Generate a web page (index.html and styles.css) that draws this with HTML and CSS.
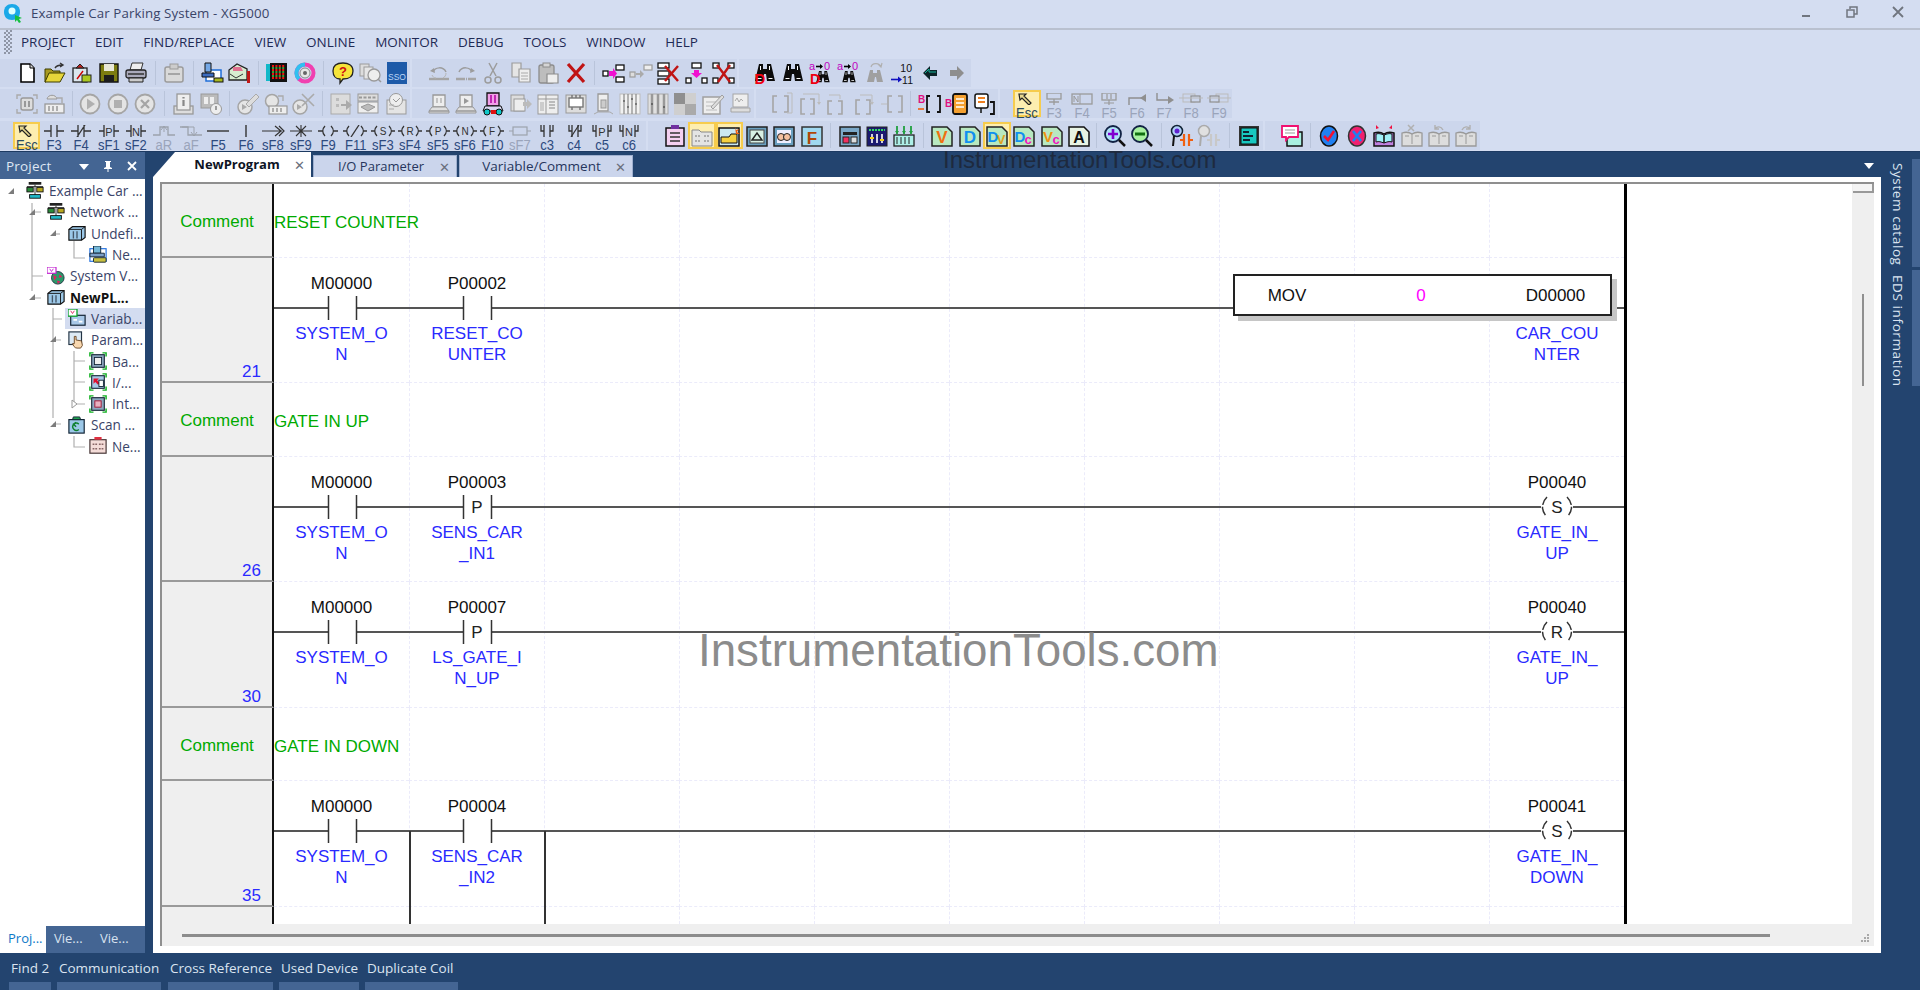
FILE: index.html
```html
<!DOCTYPE html>
<html lang="en">
<head>
<meta charset="utf-8">
<title>Example Car Parking System - XG5000</title>
<link rel="stylesheet" href="styles.css">
</head>
<body>
<svg class="defs" aria-hidden="true">
<!-- toolbar row 1 -->
<symbol id="new" viewBox="0 0 24 24"><path d="M6 3h9l4 4v14H6z" fill="#fff" stroke="#000" stroke-width="1.6"/><path d="M15 3v4h4" fill="#ddd" stroke="#000"/></symbol>
<symbol id="open" viewBox="0 0 24 24"><path d="M3 8h6l2 2h7v3H8l-4 8H3z" fill="#a89a20" stroke="#3c3c00"/><path d="M7 12h16l-5 9H3z" fill="#e6d63a" stroke="#3c3c00"/><path d="M13 7c2-3 4-3 7-3M18 2l3 2-3 2" fill="none" stroke="#333" stroke-width="1.4"/></symbol>
<symbol id="openp" viewBox="0 0 24 24"><rect x="4" y="7" width="14" height="14" fill="#dbe6ee" stroke="#222" stroke-width="1.3"/><path d="M7 7l4-4 4 4z" fill="#b22" stroke="#222"/><path d="M8 18l6-8" stroke="#c00" stroke-width="1.4"/><rect x="13" y="14" width="9" height="7" fill="#aac820" stroke="#222"/></symbol>
<symbol id="save" viewBox="0 0 24 24"><path d="M3 3h18v18H3z" fill="#7c7c10" stroke="#111" stroke-width="1.4"/><rect x="7" y="3" width="10" height="7" fill="#e8e8d8"/><rect x="7" y="14" width="10" height="7" fill="#1c1c1c"/></symbol>
<symbol id="print" viewBox="0 0 24 24"><path d="M8 2h11l-2 7H6z" fill="#eee" stroke="#333"/><rect x="2" y="9" width="20" height="8" rx="2" fill="#aab" stroke="#222" stroke-width="1.3"/><path d="M4 13h16" stroke="#333" stroke-width="1.5"/><path d="M5 17h14v4H5z" fill="#ccc" stroke="#222"/></symbol>
<symbol id="clip" viewBox="0 0 24 24"><rect x="3" y="6" width="18" height="15" rx="2" fill="#d9d9d9" stroke="#9b9b9b" stroke-width="1.5"/><rect x="8" y="3" width="8" height="5" fill="#ccc" stroke="#9b9b9b"/><path d="M6 13h12" stroke="#a5a5a5" stroke-width="2"/></symbol>
<symbol id="pcnet" viewBox="0 0 24 24"><rect x="6" y="9" width="15" height="11" fill="#fff" stroke="#1e6ed8" stroke-width="1.5"/><path d="M5 2h6v9H5z" fill="#74a8e6" stroke="#111"/><path d="M2 12h12v4H2z" fill="#3c6cc0" stroke="#111"/><rect x="14" y="17" width="9" height="4" fill="#a8b820" stroke="#111"/></symbol>
<symbol id="mail" viewBox="0 0 24 24"><path d="M2 9l8-6 10 5v11H2z" fill="#d8eccf" stroke="#222" stroke-width="1.3"/><path d="M6 6h8l2 4H6z" fill="#e07090"/><path d="M3 13l6 4 7-4" fill="none" stroke="#333"/><rect x="20" y="10" width="3" height="12" fill="#c01818"/></symbol>
<symbol id="grid" viewBox="0 0 24 24"><rect x="1" y="3" width="4" height="17" fill="#12b8c8"/><rect x="5" y="2" width="17" height="19" fill="#111"/><path d="M7 5h13M7 9h13M7 13h13M7 17h13" stroke="#f01010" stroke-width="2" stroke-dasharray="2 1.4"/><path d="M7 7h13M7 11h13M7 15h13" stroke="#40d040" stroke-width="1.4" stroke-dasharray="2 1.4"/></symbol>
<symbol id="ring" viewBox="0 0 24 24"><circle cx="12" cy="12" r="8.5" fill="none" stroke="#f040b0" stroke-width="4"/><path d="M12 3.5A8.5 8.5 0 0 0 6 18" fill="none" stroke="#30c0f0" stroke-width="4"/><circle cx="12" cy="12" r="5" fill="#e6e6e6" stroke="#888"/><circle cx="12" cy="12" r="2" fill="#666"/></symbol>
<symbol id="help" viewBox="0 0 24 24"><path d="M2 10c0-6 5-8 10-8s10 2 10 8-5 8-10 8l-3 4v-4c-4 0-7-3-7-8z" fill="#f6e43a" stroke="#222" stroke-width="1.3"/></symbol>
<symbol id="faces" viewBox="0 0 24 24"><rect x="2" y="3" width="9" height="12" fill="#ddd" stroke="#9c9c9c"/><rect x="6" y="6" width="9" height="12" fill="#e6e6e6" stroke="#9c9c9c"/><circle cx="16" cy="14" r="6" fill="#eee" stroke="#999" stroke-width="1.3"/><path d="M20 18l3 3" stroke="#999" stroke-width="1.5"/></symbol>
<symbol id="sso" viewBox="0 0 24 24"><rect x="2" y="1" width="20" height="22" fill="#1d5aa8"/></symbol>
<symbol id="undo" viewBox="0 0 24 24"><path d="M6 11c2-5 10-6 13 0" fill="none" stroke="#9c9c9c" stroke-width="1.5"/><path d="M3 10l4-3 1 5z" fill="#9c9c9c"/><path d="M2 18h20" stroke="#a5a5a5" stroke-width="2.4"/><path d="M5 14c1 2 2 3 4 3M19 12c0 2-1 4-3 5" fill="none" stroke="#b5b5b5"/></symbol>
<symbol id="redo" viewBox="0 0 24 24"><path d="M18 11c-2-5-10-6-13 0" fill="none" stroke="#9c9c9c" stroke-width="1.5"/><path d="M21 10l-4-3-1 5z" fill="#9c9c9c"/><path d="M2 18h20" stroke="#a5a5a5" stroke-width="2.4" stroke-dasharray="9 1 1 1"/></symbol>
<symbol id="cut" viewBox="0 0 24 24"><path d="M8 2l7 13M16 2L9 15" stroke="#9c9c9c" stroke-width="1.5"/><circle cx="7" cy="19" r="3" fill="none" stroke="#9c9c9c" stroke-width="1.5"/><circle cx="17" cy="19" r="3" fill="none" stroke="#9c9c9c" stroke-width="1.5"/></symbol>
<symbol id="copy" viewBox="0 0 24 24"><path d="M3 2h9v14H3z" fill="#e5e5e5" stroke="#9c9c9c" stroke-width="1.2"/><path d="M10 8h11v13H10z" fill="#eee" stroke="#9c9c9c" stroke-width="1.2"/><path d="M12 12h7M12 15h7M12 18h7" stroke="#aaa"/></symbol>
<symbol id="paste" viewBox="0 0 24 24"><rect x="3" y="4" width="15" height="18" rx="2" fill="#bdbdbd" stroke="#8c8c8c" stroke-width="1.3"/><rect x="7" y="2" width="7" height="4" fill="#d5d5d5" stroke="#8c8c8c"/><path d="M11 13h11v9H11z" fill="#eee" stroke="#8c8c8c" stroke-width="1.2"/></symbol>
<symbol id="redx" viewBox="0 0 24 24"><path d="M4 3l16 18M20 3L4 21" stroke="#c01414" stroke-width="3.2"/></symbol>
<symbol id="tins" viewBox="0 0 24 24"><rect x="1" y="10" width="5" height="5" fill="#fff" stroke="#111" stroke-width="1.3"/><rect x="14" y="4" width="8" height="5" fill="#fff" stroke="#111" stroke-width="1.3"/><rect x="14" y="16" width="8" height="5" fill="#fff" stroke="#111" stroke-width="1.3"/><path d="M7 10h4V7l4 5.500-4 5.500v-3H7z" fill="#f010d0"/></symbol>
<symbol id="tinsg" viewBox="0 0 24 24"><rect x="1" y="11" width="5" height="5" fill="#ddd" stroke="#9c9c9c" stroke-width="1.2"/><rect x="15" y="4" width="8" height="5" fill="#eee" stroke="#9c9c9c" stroke-width="1.2"/><path d="M7 12h4V9l4 4-4 4v-3H7z" fill="#aaa"/></symbol>
<symbol id="tdel" viewBox="0 0 24 24"><rect x="2" y="2" width="11" height="5" fill="#fff" stroke="#111" stroke-width="1.3"/><rect x="2" y="10" width="11" height="5" fill="#fff" stroke="#111" stroke-width="1.3"/><rect x="2" y="18" width="11" height="5" fill="#fff" stroke="#111" stroke-width="1.3"/><path d="M9 5l13 15M22 5L9 20" stroke="#c01414" stroke-width="2.4"/></symbol>
<symbol id="tdn" viewBox="0 0 24 24"><rect x="8" y="2" width="9" height="5" fill="#fff" stroke="#111" stroke-width="1.3"/><rect x="2" y="17" width="5" height="5" fill="#fff" stroke="#111" stroke-width="1.3"/><rect x="18" y="17" width="5" height="5" fill="#fff" stroke="#111" stroke-width="1.3"/><path d="M10 9h5v3h3l-5.500 5L7 12h3z" fill="#f010d0"/></symbol>
<symbol id="txd" viewBox="0 0 24 24"><rect x="2" y="2" width="6" height="5" fill="#fff" stroke="#111" stroke-width="1.3"/><rect x="17" y="2" width="6" height="5" fill="#fff" stroke="#111" stroke-width="1.3"/><rect x="2" y="17" width="5" height="5" fill="#fff" stroke="#111" stroke-width="1.3"/><rect x="18" y="17" width="5" height="5" fill="#fff" stroke="#111" stroke-width="1.3"/><path d="M6 4l13 17M19 4L7 21" stroke="#c01414" stroke-width="2.4"/></symbol>
<symbol id="bin" viewBox="0 0 24 24"><path d="M6 3h4v5h4V3h4l4 17h-8l-1-7h-2l-1 7H2z" fill="#0c0c0c"/><path d="M7 5h1v4H7zM16 5h1v4h-1zM4.500 17h4v1h-4zM15.500 17h4v1h-4z" fill="#fff"/></symbol>
<symbol id="afind" viewBox="0 0 24 24"><path d="M8 5.500h6" stroke="#000" stroke-width="1.6"/><path d="M12 3l3 2.500-3 2.500z"/><svg x="5" y="8" width="16" height="16" viewBox="0 0 24 24"><use href="#bin"/></svg></symbol>
<symbol id="afindd" viewBox="0 0 24 24"><path d="M8 5.500h6" stroke="#000" stroke-width="1.6"/><path d="M12 3l3 2.500-3 2.500z"/><svg x="7" y="8" width="16" height="16" viewBox="0 0 24 24"><use href="#bin"/></svg></symbol>
<symbol id="bing" viewBox="0 0 24 24"><path d="M7 9h3v3h4V9h3l3 12h-6l-1-5h-1l-1 5H4z" fill="#a0a0a0"/><path d="M8 6c1-4 8-5 10 0M15 3l3 3 1-4" fill="none" stroke="#b0b0b0" stroke-width="1.2"/></symbol>
<symbol id="n1011" viewBox="0 0 24 24"><path d="M1 18.500h9" stroke="#1010c0" stroke-width="1.6"/><path d="M8 15.500l4 3-4 3z" fill="#1010c0"/></symbol>
<symbol id="larrow" viewBox="0 0 24 24"><path d="M5 12l7-7v4h7v6h-7v4z" fill="#0c2428"/><path d="M7 12l4-4v3h7" fill="none" stroke="#14b098"/></symbol>
<symbol id="rarrow" viewBox="0 0 24 24"><path d="M19 12l-7-7v4H5v6h7v4z" fill="#8e8e8e"/></symbol>
<!-- toolbar row 2 -->
<symbol id="stopm" viewBox="0 0 24 24"><path d="M2 7V3h4M18 3h4v4M22 17v4h-4M6 21H2v-4" fill="none" stroke="#aaa" stroke-width="1.4"/><rect x="6" y="6" width="12" height="12" rx="2" fill="#ddd" stroke="#999" stroke-width="1.4"/><path d="M10 9v6M14 9v6" stroke="#999" stroke-width="2"/></symbol>
<symbol id="plcup" viewBox="0 0 24 24"><path d="M5 7c1-5 9-5 10 0z" fill="#ddd" stroke="#999"/><path d="M15 6h5v5" fill="none" stroke="#aaa" stroke-width="1.4"/><rect x="3" y="12" width="19" height="9" fill="#eee" stroke="#999" stroke-width="1.3"/><path d="M7 14v5M11 14v5M15 14v5" stroke="#999" stroke-width="1.5"/></symbol>
<symbol id="play" viewBox="0 0 24 24"><circle cx="12" cy="12" r="9.500" fill="#e4e4e4" stroke="#a5a5a5" stroke-width="1.8"/><path d="M9 6.500l8 5.500-8 5.500z" fill="#b0b0b0"/></symbol>
<symbol id="stop" viewBox="0 0 24 24"><circle cx="12" cy="12" r="9.500" fill="#e4e4e4" stroke="#a5a5a5" stroke-width="1.8"/><rect x="8" y="8" width="8" height="8" fill="#b0b0b0"/></symbol>
<symbol id="cx" viewBox="0 0 24 24"><circle cx="12" cy="12" r="9.500" fill="#e4e4e4" stroke="#a5a5a5" stroke-width="1.8"/><path d="M8 8l8 8M16 8l-8 8" stroke="#a5a5a5" stroke-width="2.2"/></symbol>
<symbol id="info" viewBox="0 0 24 24"><rect x="3" y="14" width="19" height="8" fill="#ddd" stroke="#999" stroke-width="1.3"/><rect x="6" y="2" width="13" height="16" fill="#eee" stroke="#999" stroke-width="1.3"/><path d="M12.500 5v1.500M12.500 8v6" stroke="#888" stroke-width="2.200"/></symbol>
<symbol id="gauge" viewBox="0 0 24 24"><rect x="2" y="2" width="17" height="14" fill="#bbb" stroke="#999"/><rect x="5" y="5" width="4" height="7" fill="#eee"/><rect x="11" y="5" width="4" height="7" fill="#eee"/><circle cx="17" cy="17" r="5.500" fill="#eee" stroke="#999"/><path d="M17 14v4" stroke="#888" stroke-width="1.6"/></symbol>
<symbol id="probe" viewBox="0 0 24 24"><circle cx="9" cy="15" r="7" fill="#e5e5e5" stroke="#a5a5a5" stroke-width="1.5"/><path d="M10 12l10-10 3 3-10 10z" fill="#ddd" stroke="#aaa"/><path d="M6 12l5 3-5 3z" fill="#aaa"/></symbol>
<symbol id="probeb" viewBox="0 0 24 24"><circle cx="8" cy="9" r="6.500" fill="#e5e5e5" stroke="#a5a5a5" stroke-width="1.5"/><path d="M14 4h5v5" fill="none" stroke="#aaa" stroke-width="1.3"/><rect x="5" y="14" width="18" height="8" fill="#eee" stroke="#999" stroke-width="1.2"/><path d="M9 16v4M13 16v4M17 16v4" stroke="#999" stroke-width="1.5"/></symbol>
<symbol id="probex" viewBox="0 0 24 24"><circle cx="9" cy="15" r="7" fill="#e5e5e5" stroke="#a5a5a5" stroke-width="1.5"/><path d="M6 12l5 3-5 3z" fill="#aaa"/><path d="M11 2l12 12M23 2L11 14" stroke="#aaa" stroke-width="1.6"/></symbol>
<symbol id="wsel" viewBox="0 0 24 24"><rect x="2" y="2" width="19" height="20" fill="#dcdcdc" stroke="#aaa"/><path d="M7 6h3v3H7zM7 12h3v3H7z" fill="#bbb"/><path d="M12 12h5V8l6 5-6 5v-4h-5z" fill="#aaa"/></symbol>
<symbol id="wtab" viewBox="0 0 24 24"><rect x="2" y="2" width="20" height="7" fill="#ddd" stroke="#999"/><path d="M3 5.500h18" stroke="#999" stroke-dasharray="3 1.500" stroke-width="2"/><rect x="2" y="10" width="20" height="11" fill="#eee" stroke="#999"/><path d="M5 15l7-3 7 3-7 4z" fill="#bbb" stroke="#999"/></symbol>
<symbol id="wfind" viewBox="0 0 24 24"><rect x="3" y="8" width="19" height="14" fill="#e4e4e4" stroke="#999"/><circle cx="12" cy="8" r="6.500" fill="#eee" stroke="#999"/><path d="M9 7l3 3 4-4" fill="none" stroke="#999"/><path d="M5 13h5M5 17h5" stroke="#aaa"/></symbol>
<symbol id="pc1" viewBox="0 0 24 24"><path d="M6 3h12v12H6z" fill="#eee" stroke="#999" stroke-width="1.3"/><path d="M10 6v5M14 6v5" stroke="#999"/><path d="M2 19h20v2H2zM5 15h14l3 4H2z" fill="#e0e0e0" stroke="#999"/></symbol>
<symbol id="pc2" viewBox="0 0 24 24"><path d="M6 3h12v12H6z" fill="#eee" stroke="#999" stroke-width="1.3"/><path d="M10 6l5 3-5 3z" fill="#999"/><path d="M2 19h20v2H2zM5 15h14l3 4H2z" fill="#e0e0e0" stroke="#999"/></symbol>
<symbol id="pcpink" viewBox="0 0 24 24"><path d="M6 1h12v13H6z" fill="#f2a0e8" stroke="#111" stroke-width="1.3"/><path d="M10 3v8M14 3v8" stroke="#b000a0" stroke-width="1.500"/><path d="M4 14h16l2 5H2z" fill="#d8d8f0" stroke="#111"/><circle cx="6" cy="20" r="3" fill="#10c8c8" stroke="#111"/><circle cx="18" cy="20" r="3" fill="#10c8c8" stroke="#111"/><rect x="10" y="18" width="5" height="4" fill="#e01010"/></symbol>
<symbol id="docs" viewBox="0 0 24 24"><rect x="2" y="3" width="13" height="16" fill="#ddd" stroke="#999"/><rect x="5" y="7" width="11" height="12" fill="#eee" stroke="#999"/><path d="M14 10h4V7l5 5-5 5v-3h-4z" fill="#bbb"/></symbol>
<symbol id="cols" viewBox="0 0 24 24"><rect x="2" y="3" width="20" height="19" fill="#eee" stroke="#999"/><path d="M10 3v19M2 7h20" stroke="#999"/><path d="M13 10h6M13 13h6M13 16h6" stroke="#888"/><rect x="4" y="10" width="4" height="9" fill="#ccc"/></symbol>
<symbol id="chip" viewBox="0 0 24 24"><rect x="2" y="3" width="20" height="18" fill="#ddd" stroke="#999"/><rect x="5" y="6" width="14" height="9" fill="#fff" stroke="#777" stroke-width="1.4"/><path d="M8 6V3M12 6V3M16 6V3M8 18v-3M16 18v-3" stroke="#777" stroke-width="1.5"/></symbol>
<symbol id="unit" viewBox="0 0 24 24"><path d="M7 2h10v17H7z" fill="#eee" stroke="#999" stroke-width="1.3"/><rect x="10" y="8" width="5" height="8" fill="#ccc" stroke="#999"/><path d="M3 22l4-2h12l3 2" fill="none" stroke="#aaa"/></symbol>
<symbol id="rack" viewBox="0 0 24 24"><rect x="2" y="2" width="20" height="20" fill="#f2f2f2" stroke="#bbb"/><path d="M6 2v20M10 2v20M14 2v20M18 2v20" stroke="#888" stroke-width="1.2"/><path d="M5 9h2M9 15h2M13 7h2M17 12h2" stroke="#777" stroke-width="2"/></symbol>
<symbol id="rack2" viewBox="0 0 24 24"><rect x="2" y="2" width="20" height="20" fill="#e0e0e0" stroke="#aaa"/><path d="M6 2v20M12 2v20M18 2v20" stroke="#999" stroke-width="2.500"/><path d="M5 12h2M17 15h2" stroke="#666" stroke-width="2"/></symbol>
<symbol id="checker" viewBox="0 0 24 24"><rect x="1" y="1" width="22" height="22" fill="#cfcfcf"/><rect x="1" y="1" width="11" height="11" fill="#8f8f8f"/><rect x="12" y="12" width="11" height="11" fill="#aaa"/></symbol>
<symbol id="note" viewBox="0 0 24 24"><rect x="2" y="5" width="17" height="17" fill="#eee" stroke="#a0a0a0" stroke-width="1.5"/><path d="M5 10h11M5 14h8M5 18h11" stroke="#bbb"/><path d="M10 15L21 3l2 2-11 12z" fill="#ddd" stroke="#a0a0a0"/></symbol>
<symbol id="pcw" viewBox="0 0 24 24"><rect x="5" y="2" width="15" height="13" fill="#eee" stroke="#a5a5a5"/><path d="M7 9l2-3 2 4 2-3 2 2" fill="none" stroke="#aaa"/><path d="M3 16h19v4H3z" fill="#ddd" stroke="#a5a5a5"/></symbol>
<symbol id="bk1" viewBox="0 0 24 24"><path d="M7 4H3v16h4M14 4h4v16h-4" fill="none" stroke="#a5a5a5" stroke-width="1.600"/><path d="M17 1h5v20h-5" fill="none" stroke="#bcbcbc"/></symbol>
<symbol id="bk2" viewBox="0 0 24 24"><path d="M7 7H3v15h4M12 7h4v15h-4" fill="none" stroke="#a5a5a5" stroke-width="1.600"/><path d="M5 2h16v10" fill="none" stroke="#bcbcbc"/><path d="M19 10l2 3 2-3z" fill="#bcbcbc"/></symbol>
<symbol id="bk3" viewBox="0 0 24 24"><path d="M7 9H3v13h4M13 9h4v13h-4" fill="none" stroke="#a5a5a5" stroke-width="1.600"/><path d="M4 3h11v4" fill="none" stroke="#bcbcbc"/></symbol>
<symbol id="bk4" viewBox="0 0 24 24"><path d="M7 8H3v14h4M13 8h4v14h-4" fill="none" stroke="#a5a5a5" stroke-width="1.600"/><path d="M7 3h12v9" fill="none" stroke="#bcbcbc"/><path d="M17 10l2 3 2-3z" fill="#bcbcbc"/></symbol>
<symbol id="bk5" viewBox="0 0 24 24"><path d="M12 4H8v16h4M18 4h4v16h-4" fill="none" stroke="#a5a5a5" stroke-width="1.600"/><path d="M1 12h6" stroke="#bcbcbc"/></symbol>
<symbol id="bb1" viewBox="0 0 24 24"><path d="M0 17h6" stroke="#f06010" stroke-width="1.600"/><path d="M12 4H9v16h3M19 4h3v16h-3" fill="none" stroke="#111" stroke-width="1.800"/></symbol>
<symbol id="bb2" viewBox="0 0 24 24"><rect x="8" y="2" width="14" height="20" rx="2" fill="#f4a030" stroke="#111" stroke-width="1.800"/><path d="M11 7h8M11 11h8M11 15h8" stroke="#fff" stroke-width="1.600"/></symbol>
<symbol id="bb3" viewBox="0 0 24 24"><rect x="2" y="2" width="13" height="14" rx="2" fill="#fff" stroke="#111" stroke-width="1.500"/><path d="M5 6h7M5 10h7" stroke="#f08020" stroke-width="2"/><path d="M8 16v5" stroke="#111" stroke-width="1.500"/><path d="M17 10h4v12h-4" fill="none" stroke="#111" stroke-width="1.800"/></symbol>
<symbol id="esc" viewBox="0 0 24 12"><path d="M4 1h7L9 3l7 7-2 2-7-7-2 2z" fill="#e8d890" stroke="#222" stroke-width="1.200"/></symbol>
<symbol id="g3" viewBox="0 0 24 12"><rect x="5" y="0" width="14" height="6" fill="none" stroke="#9a9a9a" stroke-width="1.300"/><path d="M12 6v6M7 9h10" stroke="#9a9a9a" stroke-width="1.300"/></symbol>
<symbol id="g4" viewBox="0 0 24 12"><rect x="2" y="1" width="20" height="10" fill="none" stroke="#9a9a9a" stroke-width="1.300"/><path d="M10 1v10M4 9V3l4 6V3" fill="none" stroke="#9a9a9a"/></symbol>
<symbol id="g5" viewBox="0 0 24 12"><rect x="5" y="0" width="14" height="7" fill="none" stroke="#9a9a9a" stroke-width="1.300"/><path d="M10 1v5M14 1v5M12 7v5M7 10h10" stroke="#9a9a9a" stroke-width="1.200"/></symbol>
<symbol id="g6" viewBox="0 0 24 12"><path d="M4 12V5h13" fill="none" stroke="#8f8f8f" stroke-width="1.400"/><path d="M21 1v8l-6-4z" fill="#8f8f8f"/></symbol>
<symbol id="g7" viewBox="0 0 24 12"><path d="M5 0v7h13" fill="none" stroke="#8f8f8f" stroke-width="1.400"/><path d="M16 3v8l6-4z" fill="#8f8f8f"/></symbol>
<symbol id="g8" viewBox="0 0 24 12"><rect x="4" y="1" width="12" height="8" fill="none" stroke="#bbb"/><rect x="12" y="3" width="9" height="6" fill="#ccd6ec" stroke="#8f8f8f" stroke-width="1.200"/><path d="M0 5h24" stroke="#bbb"/></symbol>
<symbol id="g9" viewBox="0 0 24 12"><rect x="9" y="1" width="12" height="8" fill="none" stroke="#bbb"/><rect x="3" y="3" width="9" height="6" fill="#ccd6ec" stroke="#8f8f8f" stroke-width="1.200"/><path d="M0 5h24" stroke="#bbb"/></symbol>
<!-- function keys -->
<symbol id="kno" viewBox="0 0 24 12"><path d="M2 6h7M9 0v12M15 0v12M15 6h7" fill="none" stroke="#333" stroke-width="1.300"/></symbol>
<symbol id="knc" viewBox="0 0 24 12"><path d="M2 6h7M9 0v12M15 0v12M15 6h7M8 12l8-12" fill="none" stroke="#333" stroke-width="1.300"/></symbol>
<symbol id="kw" viewBox="0 0 24 12"><path d="M2 6h5M7 0v12M17 0v12M17 6h5" fill="none" stroke="#333" stroke-width="1.300"/></symbol>
<symbol id="rise" viewBox="0 0 24 12"><path d="M1 10h7V2h8v8h7" fill="none" stroke="#9ca2ac" stroke-width="1.300"/><path d="M12 7V2M9 5l3-4 3 4" fill="none" stroke="#9ca2ac"/></symbol>
<symbol id="fall" viewBox="0 0 24 12"><path d="M1 2h8v8h14" fill="none" stroke="#9ca2ac" stroke-width="1.300"/><path d="M3 2h12v7" fill="none" stroke="#9ca2ac"/><path d="M12 7l3 4 3-4" fill="none" stroke="#9ca2ac"/></symbol>
<symbol id="hl" viewBox="0 0 24 12"><path d="M1 6h22" stroke="#333" stroke-width="1.400"/></symbol>
<symbol id="vl" viewBox="0 0 24 12"><path d="M12 0v12" stroke="#333" stroke-width="1.400"/></symbol>
<symbol id="ar" viewBox="0 0 24 12"><path d="M1 6h20M14 1l6 5-6 5M18 1l5 5-5 5" fill="none" stroke="#333" stroke-width="1.200"/></symbol>
<symbol id="star" viewBox="0 0 24 12"><path d="M1 6h22M12 0v12M7 1l10 10M17 1L7 11" fill="none" stroke="#333" stroke-width="1.100"/></symbol>
<symbol id="cb" viewBox="0 0 24 12"><path d="M2 6h5M22 6h-5M9 1C6 4 6 8 9 11M15 1c3 3 3 7 0 10" fill="none" stroke="#333" stroke-width="1.300"/></symbol>
<symbol id="cbn" viewBox="0 0 24 12"><path d="M0 6h4M24 6h-4M6 1C3 4 3 8 6 11M18 1c3 3 3 7 0 10" fill="none" stroke="#333" stroke-width="1.300"/></symbol>
<symbol id="cbs" viewBox="0 0 24 12"><use href="#cbn"/><path d="M8 12l8-12" stroke="#333" stroke-width="1.300"/></symbol>
<symbol id="fb" viewBox="0 0 24 12"><path d="M1 6h4M19 6h4" stroke="#9ca2ac" stroke-width="1.200"/><rect x="5" y="2" width="14" height="8" fill="none" stroke="#9ca2ac" stroke-width="1.200"/></symbol>
<symbol id="c3" viewBox="0 0 24 12"><path d="M6 0v6h3M9 0v12M15 0v12M18 0v6h-3" fill="none" stroke="#333" stroke-width="1.300"/></symbol>
<symbol id="c4" viewBox="0 0 24 12"><use href="#c3"/><path d="M8 12l8-12" stroke="#333" stroke-width="1.200"/></symbol>
<symbol id="cw" viewBox="0 0 24 12"><path d="M3 0v6h3M6 0v12M18 0v12M21 0v6h-3" fill="none" stroke="#333" stroke-width="1.300"/></symbol>
<!-- row 3 group 2 -->
<symbol id="clip3" viewBox="0 0 24 24"><rect x="3" y="4" width="18" height="18" fill="#f4d0f0" stroke="#111" stroke-width="1.500"/><rect x="8" y="1" width="8" height="4" fill="#7030a0"/><path d="M7 9h10M7 13h10M7 17h10" stroke="#333" stroke-width="1.500"/></symbol>
<symbol id="foldh" viewBox="0 0 24 24"><path d="M2 6h7l2 2h11v14H2z" fill="#e4e4e4" stroke="#888"/><path d="M5 12h5M14 12h5M5 17h5M14 17h5" stroke="#999" stroke-width="1.500" stroke-dasharray="2 1"/></symbol>
<symbol id="foldo" viewBox="0 0 24 24"><rect x="2" y="4" width="20" height="18" fill="#cbe8f0" stroke="#111" stroke-width="1.500"/><path d="M4 13h8l2-3h6v9H4z" fill="#f4d040" stroke="#111"/><path d="M18 3l1 3 3-1-2 3 3 2-4 0z" fill="#f06010"/></symbol>
<symbol id="scr1" viewBox="0 0 24 24"><rect x="2" y="3" width="20" height="19" fill="#6aa0c0" stroke="#222" stroke-width="1.500"/><rect x="5" y="6" width="14" height="13" fill="#d8f0e4" stroke="#444"/><path d="M7 16l5-7 5 7z" fill="none" stroke="#222" stroke-width="1.400"/></symbol>
<symbol id="scr2" viewBox="0 0 24 24"><rect x="2" y="3" width="20" height="19" fill="#6aa0c0" stroke="#222" stroke-width="1.500"/><rect x="5" y="6" width="14" height="13" fill="#eef"/><circle cx="9" cy="13" r="3.500" fill="#f4c0a0" stroke="#222"/><circle cx="15" cy="13" r="3.500" fill="#f4c0a0" stroke="#222"/></symbol>
<symbol id="scrf" viewBox="0 0 24 24"><rect x="2" y="3" width="20" height="19" fill="#a0d8f0" stroke="#333" stroke-width="1.500"/></symbol>
<symbol id="tool1" viewBox="0 0 24 24"><rect x="2" y="3" width="20" height="19" fill="#7aa8c8" stroke="#222" stroke-width="1.500"/><path d="M5 8h14v3H5z" fill="#222"/><rect x="5" y="13" width="6" height="6" fill="#f03060" stroke="#222"/><rect x="13" y="13" width="6" height="6" fill="#ddd" stroke="#222"/></symbol>
<symbol id="tool2" viewBox="0 0 24 24"><rect x="2" y="3" width="20" height="19" fill="#1a1a70" stroke="#222"/><path d="M4 6h16" stroke="#30e060" stroke-width="2" stroke-dasharray="2 1"/><path d="M7 10v9M12 10v9M17 10v9" stroke="#fff" stroke-width="1.600"/><path d="M5 14h4M15 16h4" stroke="#f0d020" stroke-width="2"/></symbol>
<symbol id="tool3" viewBox="0 0 24 24"><rect x="2" y="11" width="20" height="11" fill="#aef0e8" stroke="#222" stroke-width="1.300"/><path d="M5 13v7M9 13v7M13 13v7M17 13v7" stroke="#222"/><path d="M5 2v8M12 2v8M19 2v8" stroke="#20a040" stroke-width="1.800"/><path d="M3 7l2 3 2-3M10 7l2 3 2-3M17 7l2 3 2-3" fill="#20a040"/></symbol>
<symbol id="doc" viewBox="0 0 24 24"><path d="M2 3h15l5 5v14H2z" fill="#b8e8c0" stroke="#222" stroke-width="1.500"/></symbol>
<symbol id="doca" viewBox="0 0 24 24"><path d="M2 3h15l5 5v14H2z" fill="#e8f4e4" stroke="#111" stroke-width="1.500"/></symbol>
<symbol id="zin" viewBox="0 0 24 24"><circle cx="10" cy="10" r="8" fill="#b0e0f8" stroke="#124" stroke-width="1.800"/><path d="M16 16l6 6" stroke="#111" stroke-width="2.500"/><path d="M10 5v10M5 10h10" stroke="#8000d0" stroke-width="2.600"/></symbol>
<symbol id="zout" viewBox="0 0 24 24"><circle cx="10" cy="10" r="8" fill="#a8f0a0" stroke="#124" stroke-width="1.800"/><path d="M16 16l6 6" stroke="#111" stroke-width="2.500"/><path d="M5 10h10" stroke="#107010" stroke-width="3"/></symbol>
<symbol id="zpin" viewBox="0 0 24 24"><circle cx="7" cy="7" r="5.500" fill="#b0d0f8" stroke="#123" stroke-width="1.500"/><circle cx="7" cy="7" r="2.500" fill="#6020d0"/><path d="M4 12l-1 10" stroke="#111" stroke-width="2"/><path d="M10 16h3M20 16h3M14 10v12M19 10v12" stroke="#f06010" stroke-width="2.200"/></symbol>
<symbol id="zping" viewBox="0 0 24 24"><circle cx="7" cy="7" r="5.500" fill="#e0e0e0" stroke="#aaa" stroke-width="1.500"/><path d="M4 12l-1 10" stroke="#aaa" stroke-width="2"/><path d="M10 16h3M20 16h3M14 10v12M19 10v12" stroke="#c8c8c8" stroke-width="2.200"/></symbol>
<symbol id="term" viewBox="0 0 24 24"><rect x="2" y="2" width="20" height="20" fill="#333" /><rect x="4" y="4" width="16" height="16" fill="#18c8c0" stroke="#111"/><path d="M6 8h6M6 12h10M6 16h7" stroke="#123" stroke-width="1.800"/></symbol>
<symbol id="cmt" viewBox="0 0 24 24"><rect x="7" y="8" width="15" height="14" fill="#a8f0e0" stroke="#111" stroke-width="1.500"/><path d="M2 2h16v11H9l-3 3v-3H2z" fill="#fff" stroke="#f01070" stroke-width="1.800"/><path d="M5 6h10M5 9h10" stroke="#999"/></symbol>
<symbol id="chk" viewBox="0 0 24 24"><ellipse cx="12" cy="12" rx="8.500" ry="10" fill="#2080f0" stroke="#111" stroke-width="1.500"/><path d="M7 12l4 4 6-9" fill="none" stroke="#f01030" stroke-width="2.600"/></symbol>
<symbol id="unchk" viewBox="0 0 24 24"><ellipse cx="12" cy="12" rx="8.500" ry="10" fill="#f02070" stroke="#333" stroke-width="1.500"/><path d="M8 7l8 10M16 7L8 17" stroke="#2080f0" stroke-width="2.600"/></symbol>
<symbol id="bm" viewBox="0 0 24 24"><path d="M2 9c3-1 7-1 10 1 3-2 7-2 10-1v13H2z" fill="#c080e0" stroke="#111" stroke-width="1.500"/><path d="M4 10c3-1 5 0 8 1v8c-3-1-5-2-8-1zM20 10c-3-1-5 0-8 1v8c3-1 5-2 8-1z" fill="#a0f0f8" stroke="#111"/><path d="M4 1l3 3-3 1zM20 1l-3 3 3 1z" fill="#f01040"/></symbol>
<symbol id="bmx" viewBox="0 0 24 24"><path d="M2 9c3-1 7-1 10 1 3-2 7-2 10-1v13H2z" fill="#ddd" stroke="#999" stroke-width="1.300"/><path d="M12 10v10M5 12h4M15 12h4" stroke="#999"/><path d="M8 1l6 6M14 1L8 7" stroke="#b0b0b0" stroke-width="1.500"/></symbol>
<symbol id="bml" viewBox="0 0 24 24"><path d="M2 9c3-1 7-1 10 1 3-2 7-2 10-1v13H2z" fill="#ddd" stroke="#999" stroke-width="1.300"/><path d="M12 10v10M5 12h4M15 12h4" stroke="#999"/><path d="M16 6c-2-4-6-4-8-1M8 1v4h4" fill="none" stroke="#b0b0b0" stroke-width="1.400"/></symbol>
<symbol id="bmr" viewBox="0 0 24 24"><path d="M2 9c3-1 7-1 10 1 3-2 7-2 10-1v13H2z" fill="#ddd" stroke="#999" stroke-width="1.300"/><path d="M12 10v10M5 12h4M15 12h4" stroke="#999"/><path d="M8 6c2-4 6-4 8-1M16 1v4h-4" fill="none" stroke="#b0b0b0" stroke-width="1.400"/></symbol>
<!-- tree icons -->
<symbol id="tnet" viewBox="0 0 20 20"><rect x="3" y="0" width="14" height="3" fill="#222"/><path d="M10 3v14" stroke="#222"/><rect x="1" y="6" width="7" height="5" fill="#2a8a3a" stroke="#111"/><rect x="12" y="6" width="7" height="5" fill="#b8a820" stroke="#111"/><path d="M1 5h18" stroke="#333"/><rect x="4" y="14" width="12" height="4" fill="#22b8c8" stroke="#111"/></symbol>
<symbol id="tplc" viewBox="0 0 20 20"><path d="M1 6l4-3h14v12l-4 3H1z" fill="#9cc8e8" stroke="#111" stroke-width="1.300"/><path d="M1 6h14v12M15 6l4-3" fill="none" stroke="#111"/><path d="M6 8v8M10 8v8" stroke="#456" stroke-width="1.500"/></symbol>
<symbol id="tpc" viewBox="0 0 20 20"><rect x="1" y="3" width="18" height="14" fill="#fff" stroke="#2070e0" stroke-width="1.300"/><path d="M5 0h8v8H5z" fill="#74b8d8" stroke="#123"/><path d="M1 8h16v4H1z" fill="#7ca0c8" stroke="#123"/><rect x="5" y="13" width="14" height="5" rx="1" fill="#c8c040" stroke="#123"/></symbol>
<symbol id="tsys" viewBox="0 0 20 20"><circle cx="12" cy="12" r="7" fill="#2a9a6a" stroke="#234"/><path d="M7 9l4 2-3 4zM14 8l3 3-4 1zM11 15l4 1-3 3z" fill="#e02060"/><rect x="0" y="0" width="10" height="7" fill="#fff" stroke="#c020d0" stroke-width="1.300"/><path d="M3 2l2 3 2-3" fill="none" stroke="#c020d0"/></symbol>
<symbol id="tvar" viewBox="0 0 20 20"><rect x="3" y="7" width="16" height="11" fill="#a8c8e8" stroke="#123" stroke-width="1.300"/><rect x="0" y="0" width="10" height="8" fill="#fff" stroke="#10a030" stroke-width="1.500"/><path d="M3 2l2 3 2-3" fill="none" stroke="#e02060"/><path d="M6 12h4M12 14h4" stroke="#fff" stroke-width="2"/></symbol>
<symbol id="tpar" viewBox="0 0 20 20"><rect x="1" y="1" width="14" height="14" fill="#ddeaf4" stroke="#234" stroke-width="1.300"/><path d="M10 19c-3 0-4-3-5-5l2 0V6l2 0 0 4 6 1 1 5-2 3z" fill="#f8d8b0" stroke="#642"/></symbol>
<symbol id="tbox" viewBox="0 0 20 20"><path d="M1 5V1h4M15 1h4v4M19 15v4h-4M5 19H1v-4" fill="none" stroke="#10b020" stroke-width="1.600"/><rect x="3" y="3" width="14" height="14" fill="#8fa8c0" stroke="#123" stroke-width="1.200"/><rect x="6" y="6" width="8" height="8" fill="#eee" stroke="#123"/></symbol>
<symbol id="tbox2" viewBox="0 0 20 20"><path d="M1 5V1h4M15 1h4v4M19 15v4h-4M5 19H1v-4" fill="none" stroke="#10b020" stroke-width="1.600"/><rect x="3" y="3" width="14" height="14" fill="#a8c8e8" stroke="#123" stroke-width="1.200"/><path d="M5 6h6l-2 2 3 3-2 2-3-3-2 2z" fill="#e01030"/><rect x="11" y="8" width="5" height="7" fill="#fff" stroke="#123"/></symbol>
<symbol id="tbox3" viewBox="0 0 20 20"><path d="M1 5V1h4M15 1h4v4M19 15v4h-4M5 19H1v-4" fill="none" stroke="#10b020" stroke-width="1.600"/><rect x="3" y="3" width="14" height="14" fill="#8fa8c0" stroke="#123" stroke-width="1.200"/><rect x="6.500" y="6.500" width="7" height="7" fill="#e8b0c0" stroke="#a01030"/></symbol>
<symbol id="tscan" viewBox="0 0 20 20"><rect x="1" y="4" width="17" height="15" fill="#9cc8e8" stroke="#123" stroke-width="1.300"/><path d="M6 1h7l1 3H5z" fill="#20a050" stroke="#123"/><path d="M12 9a4 4 0 1 0 0 6M9 7l-3 2 3 3" fill="none" stroke="#108030" stroke-width="1.600"/></symbol>
<symbol id="tnew" viewBox="0 0 20 20"><rect x="1" y="3" width="18" height="15" fill="#f4dcd8" stroke="#433" stroke-width="1.300"/><path d="M6 0h8v3H6z" fill="#e03040"/><path d="M4 8h5M11 8h5M4 13h5M11 13h5" stroke="#866" stroke-width="1.500" stroke-dasharray="2 1"/></symbol>
<symbol id="appicon" viewBox="0 0 20 20"><path d="M9 1c5 0 8 3 8 8s-3 8-8 8-8-3-8-8 3-8 8-8z" fill="#1aa8e8"/><circle cx="9" cy="8" r="3.500" fill="#dff"/><path d="M12 12l7 3-3 1 2 3-2 1-2-3-2 2z" fill="#14c040"/></symbol>
<symbol id="contact" viewBox="0 0 135 24"><path d="M0 12h54M82 12h53" stroke="#555" stroke-width="2"/><path d="M54.500 0v24M82.500 0v24" stroke="#333" stroke-width="1.500"/></symbol>
<symbol id="coil" viewBox="0 0 135 24"><path d="M0 12h52M84 12h51" stroke="#555" stroke-width="2"/><path d="M58 2c-6 6-6 14 0 20M78 2c6 6 6 14 0 20" fill="none" stroke="#333" stroke-width="1.500" stroke-dasharray="9 2 9"/></symbol>
</svg>

<header class="titlebar">
  <svg class="appicon"><use href="#appicon"/></svg>
  <span class="apptitle">Example Car Parking System - XG5000</span>
  <div class="winbtns">
    <svg class="wb" viewBox="0 0 16 16"><path d="M4 11h8" stroke="#70757f" stroke-width="2"/></svg>
    <svg class="wb" viewBox="0 0 16 16"><path d="M6 4V2h7v7h-3" fill="none" stroke="#70757f" stroke-width="1.500"/><rect x="3" y="5" width="7" height="7" fill="none" stroke="#70757f" stroke-width="1.500"/></svg>
    <svg class="wb" viewBox="0 0 16 16"><path d="M3 2l10 10M13 2L3 12" stroke="#70757f" stroke-width="1.800"/></svg>
  </div>
</header>

<nav class="menubar">
  <span class="grip"></span>
  <span>PROJECT</span><span>EDIT</span><span>FIND/REPLACE</span><span>VIEW</span><span>ONLINE</span><span>MONITOR</span><span>DEBUG</span><span>TOOLS</span><span>WINDOW</span><span>HELP</span>
</nav>

<section class="toolbars">
  <div class="tbrow">
    <div class="tb w410"><span class="grip"></span>
      <span class="b"><svg><use href="#new"/></svg></span><span class="b"><svg><use href="#open"/></svg></span><span class="b"><svg><use href="#openp"/></svg></span><span class="b"><svg><use href="#save"/></svg></span><span class="b"><svg><use href="#print"/></svg></span><i class="sep"></i>
      <span class="b"><svg><use href="#clip"/></svg></span><i class="sep"></i>
      <span class="b"><svg><use href="#pcnet"/></svg></span><span class="b"><svg><use href="#mail"/></svg></span><i class="sep"></i>
      <span class="b"><svg><use href="#grid"/></svg></span><span class="b"><svg><use href="#ring"/></svg></span><i class="sep"></i>
      <span class="b"><svg><use href="#help"/><text x="12" y="15" class="gt" font-size="13" font-weight="700" fill="#d01010" text-anchor="middle">?</text></svg></span><span class="b"><svg><use href="#faces"/></svg></span><span class="b"><svg><use href="#sso"/><text x="12" y="19" class="gt" font-size="8.5" fill="#bcd6f6" text-anchor="middle">SSO</text></svg></span>
    </div>
    <div class="tb"><span class="grip"></span>
      <span class="b"><svg><use href="#undo"/></svg></span><span class="b"><svg><use href="#redo"/></svg></span><span class="b"><svg><use href="#cut"/></svg></span><span class="b"><svg><use href="#copy"/></svg></span><span class="b"><svg><use href="#paste"/></svg></span><span class="b"><svg><use href="#redx"/></svg></span><i class="sep"></i>
      <span class="b"><svg><use href="#tins"/></svg></span><span class="b"><svg><use href="#tinsg"/></svg></span><span class="b"><svg><use href="#tdel"/></svg></span><span class="b"><svg><use href="#tdn"/></svg></span><span class="b"><svg><use href="#txd"/></svg></span>
    </div>
    <div class="tb"><span class="grip"></span>
      <span class="b"><svg><use href="#bin"/><text x="7" y="23" class="gt" font-size="15" font-weight="700" fill="#f00010" text-anchor="middle">D</text></svg></span>
      <span class="b"><svg><use href="#bin"/></svg></span>
      <span class="b"><svg><use href="#afindd"/><text x="1" y="9" class="gt" font-size="11" fill="#c000c0">a</text><text x="16" y="9" class="gt" font-size="11" fill="#c000c0">0</text><text x="7" y="23" class="gt" font-size="14" font-weight="700" fill="#f00010" text-anchor="middle">D</text></svg></span>
      <span class="b"><svg><use href="#afind"/><text x="1" y="9" class="gt" font-size="11" fill="#c000c0">a</text><text x="16" y="9" class="gt" font-size="11" fill="#c000c0">0</text></svg></span>
      <span class="b"><svg><use href="#bing"/></svg></span>
      <span class="b"><svg><use href="#n1011"/><text x="22" y="11" class="gt" font-size="10.500" fill="#111" text-anchor="end">10</text><text x="23" y="23" class="gt" font-size="10.500" fill="#111" text-anchor="end">11</text></svg></span>
      <span class="b"><svg><use href="#larrow"/></svg></span><span class="b"><svg><use href="#rarrow"/></svg></span>
    </div>
  </div>

  <div class="tbrow tall">
    <div class="tb w410"><span class="grip"></span>
      <span class="b"><svg><use href="#stopm"/></svg></span><span class="b"><svg><use href="#plcup"/></svg></span><i class="sep n"></i>
      <span class="b"><svg><use href="#play"/></svg></span><span class="b"><svg><use href="#stop"/></svg></span><span class="b"><svg><use href="#cx"/></svg></span><i class="sep"></i>
      <span class="b"><svg><use href="#info"/></svg></span><span class="b"><svg><use href="#gauge"/></svg></span><i class="sep"></i>
      <span class="b"><svg><use href="#probe"/></svg></span><span class="b"><svg><use href="#probeb"/></svg></span><span class="b"><svg><use href="#probex"/></svg></span><i class="sep"></i>
      <span class="b"><svg><use href="#wsel"/></svg></span><span class="b"><svg><use href="#wtab"/></svg></span><span class="b"><svg><use href="#wfind"/></svg></span>
    </div>
    <div class="tb"><span class="grip"></span>
      <span class="b"><svg><use href="#pc1"/></svg></span><span class="b"><svg><use href="#pc2"/></svg></span><span class="b"><svg><use href="#pcpink"/></svg></span><span class="b"><svg><use href="#docs"/></svg></span><span class="b"><svg><use href="#cols"/></svg></span><span class="b"><svg><use href="#chip"/></svg></span><span class="b"><svg><use href="#unit"/></svg></span><span class="b"><svg><use href="#rack"/></svg></span><span class="b"><svg><use href="#rack2"/></svg></span><span class="b"><svg><use href="#checker"/></svg></span><span class="b"><svg><use href="#note"/></svg></span><span class="b"><svg><use href="#pcw"/></svg></span>
    </div>
    <div class="tb"><span class="grip"></span>
      <span class="b"><svg><use href="#bk1"/></svg></span><span class="b"><svg><use href="#bk2"/></svg></span><span class="b"><svg><use href="#bk3"/></svg></span><span class="b"><svg><use href="#bk4"/></svg></span><span class="b"><svg><use href="#bk5"/></svg></span><i class="sep"></i>
      <span class="b"><svg><use href="#bb1"/><text x="0" y="11" class="gt" font-size="10" font-weight="700" fill="#e01080">B</text></svg></span><span class="b"><svg><use href="#bb2"/><text x="0" y="15" class="gt" font-size="10" font-weight="700" fill="#e01080">B</text></svg></span><span class="b"><svg><use href="#bb3"/></svg></span>
    </div>
    <div class="tb"><span class="grip"></span>
      <span class="fk on"><svg><use href="#esc"/></svg><b>Esc</b></span>
      <span class="fk off"><svg><use href="#g3"/></svg><b>F3</b></span><span class="fk off"><svg><use href="#g4"/></svg><b>F4</b></span><span class="fk off"><svg><use href="#g5"/></svg><b>F5</b></span><span class="fk off"><svg><use href="#g6"/></svg><b>F6</b></span><span class="fk off"><svg><use href="#g7"/></svg><b>F7</b></span><span class="fk off"><svg><use href="#g8"/></svg><b>F8</b></span><span class="fk off"><svg><use href="#g9"/></svg><b>F9</b></span>
    </div>
  </div>

  <div class="tbrow tall">
    <div class="tb w646"><span class="grip"></span>
      <span class="fk on"><svg><use href="#esc"/></svg><b>Esc</b></span>
      <span class="fk"><svg><use href="#kno"/></svg><b>F3</b></span><span class="fk"><svg><use href="#knc"/></svg><b>F4</b></span>
      <span class="fk"><svg><use href="#kw"/><text x="12" y="10.500" class="gt" font-size="11" fill="#333" text-anchor="middle">P</text></svg><b>sF1</b></span>
      <span class="fk"><svg><use href="#kw"/><text x="12" y="10.500" class="gt" font-size="11" fill="#333" text-anchor="middle">N</text></svg><b>sF2</b></span>
      <span class="fk off"><svg><use href="#rise"/></svg><b>aR</b></span><span class="fk off"><svg><use href="#fall"/></svg><b>aF</b></span><span class="fk"><svg><use href="#hl"/></svg><b>F5</b></span><span class="fk"><svg><use href="#vl"/></svg><b>F6</b></span><span class="fk"><svg><use href="#ar"/></svg><b>sF8</b></span><span class="fk"><svg><use href="#star"/></svg><b>sF9</b></span><span class="fk"><svg><use href="#cb"/></svg><b>F9</b></span><span class="fk"><svg><use href="#cbs"/></svg><b>F11</b></span>
      <span class="fk"><svg><use href="#cbn"/><text x="12" y="10" class="gt" font-size="10" fill="#333" text-anchor="middle">S</text></svg><b>sF3</b></span>
      <span class="fk"><svg><use href="#cbn"/><text x="12" y="10" class="gt" font-size="10" fill="#333" text-anchor="middle">R</text></svg><b>sF4</b></span>
      <span class="fk"><svg><use href="#cbn"/><text x="12" y="10" class="gt" font-size="10" fill="#333" text-anchor="middle">P</text></svg><b>sF5</b></span>
      <span class="fk"><svg><use href="#cbn"/><text x="12" y="10" class="gt" font-size="10" fill="#333" text-anchor="middle">N</text></svg><b>sF6</b></span>
      <span class="fk"><svg><use href="#cbn"/><text x="12" y="10" class="gt" font-size="10" fill="#333" text-anchor="middle">F</text></svg><b>F10</b></span>
      <span class="fk off"><svg><use href="#fb"/></svg><b>sF7</b></span><span class="fk"><svg><use href="#c3"/></svg><b>c3</b></span><span class="fk"><svg><use href="#c4"/></svg><b>c4</b></span>
      <span class="fk"><svg><use href="#cw"/><text x="12" y="10.500" class="gt" font-size="11" fill="#333" text-anchor="middle">P</text></svg><b>c5</b></span>
      <span class="fk"><svg><use href="#cw"/><text x="12" y="10.500" class="gt" font-size="11" fill="#333" text-anchor="middle">N</text></svg><b>c6</b></span>
    </div>
    <div class="tb"><span class="grip"></span>
      <span class="b"><svg><use href="#clip3"/></svg></span><span class="b on"><svg><use href="#foldh"/></svg></span><span class="b on"><svg><use href="#foldo"/></svg></span><span class="b"><svg><use href="#scr1"/></svg></span><span class="b"><svg><use href="#scr2"/></svg></span>
      <span class="b"><svg><use href="#scrf"/><text x="12" y="20" class="gt" font-size="17" font-weight="700" fill="#b04808" text-anchor="middle">F</text></svg></span><i class="sep"></i>
      <span class="b"><svg><use href="#tool1"/></svg></span><span class="b"><svg><use href="#tool2"/></svg></span><span class="b"><svg><use href="#tool3"/></svg></span><i class="sep"></i>
      <span class="b"><svg><use href="#doc"/><text x="12" y="19" class="gt" font-size="17" font-weight="700" fill="#f07010" text-anchor="middle">V</text></svg></span>
      <span class="b"><svg><use href="#doc"/><text x="12" y="19" class="gt" font-size="17" font-weight="700" fill="#1090f0" text-anchor="middle">D</text></svg></span>
      <span class="b on"><svg><use href="#doc"/><text x="8" y="18" class="gt" font-size="15" font-weight="700" fill="#1090f0" text-anchor="middle">D</text><text x="16" y="20" class="gt" font-size="13" font-weight="700" fill="#e0a020" text-anchor="middle">V</text></svg></span>
      <span class="b"><svg><use href="#doc"/><text x="8" y="18" class="gt" font-size="15" font-weight="700" fill="#1090f0" text-anchor="middle">D</text><text x="16" y="20" class="gt" font-size="13" font-weight="700" fill="#f010c0" text-anchor="middle">c</text></svg></span>
      <span class="b"><svg><use href="#doc"/><text x="8" y="18" class="gt" font-size="15" font-weight="700" fill="#f09010" text-anchor="middle">V</text><text x="16" y="20" class="gt" font-size="13" font-weight="700" fill="#f010c0" text-anchor="middle">c</text></svg></span>
      <span class="b"><svg><use href="#doca"/><text x="12" y="19" class="gt" font-size="16" font-weight="700" fill="#111" text-anchor="middle">A</text></svg></span><i class="sep s"></i>
      <span class="b"><svg><use href="#zin"/></svg></span><span class="b"><svg><use href="#zout"/></svg></span><i class="sep l"></i>
      <span class="b"><svg><use href="#zpin"/></svg></span><span class="b"><svg><use href="#zping"/></svg></span><i class="sep l"></i>
      <span class="b"><svg><use href="#term"/></svg></span>
    </div>
    <div class="tb"><span class="grip"></span>
      <span class="b"><svg><use href="#cmt"/></svg></span><i class="sep"></i>
      <span class="b"><svg><use href="#chk"/></svg></span><span class="b"><svg><use href="#unchk"/></svg></span><span class="b"><svg><use href="#bm"/></svg></span><span class="b"><svg><use href="#bmx"/></svg></span><span class="b"><svg><use href="#bml"/></svg></span><span class="b"><svg><use href="#bmr"/></svg></span>
    </div>
  </div>
</section>

<main class="workspace">
  <div class="dockrow">
    <aside class="project">
      <div class="projhead"><span class="projtitle">Project</span>
        <svg class="phbtn" viewBox="0 0 12 12"><path d="M1 4h10l-5 6z" fill="#fff"/></svg>
        <svg class="phbtn" viewBox="0 0 12 12"><path d="M3 1h6v1H8v5l2 1v1H6.500v3h-1V9H2V8l2-1V2H3z" fill="#fff"/></svg>
        <svg class="phbtn" viewBox="0 0 12 12"><path d="M2 2l8 8M10 2l-8 8" stroke="#fff" stroke-width="1.800"/></svg>
      </div>
      <div class="tree">
        <svg class="treelines" viewBox="0 0 145 460"><g fill="none" stroke="#b0b0b0" stroke-width="1.200"><path d="M32 24v88M32 97h11M32 33h9"/><path d="M53 129v110M53 140h9M53 161h8M53 245h8M32 119h9"/><path d="M53 55h7"/><path d="M74 62v17h11"/><path d="M74 172v55M74 182h11M74 203h11M76 225h9"/><path d="M74 257v11h11"/></g><g fill="#7c7c7c"><path d="M14 9v6H8zM35 30v6h-6zM56 51v6h-6zM35 115v6h-6zM56 157v6h-6zM56 242v6h-6z"/></g><path d="M72 221l5 4-5 4z" fill="#fff" stroke="#999"/></svg>
        <div class="ti l0"><svg><use href="#tnet"/></svg><span>Example Car ...</span></div>
        <div class="ti l1"><svg><use href="#tnet"/></svg><span>Network ...</span></div>
        <div class="ti l2"><svg><use href="#tplc"/></svg><span>Undefi...</span></div>
        <div class="ti l3"><svg><use href="#tpc"/></svg><span>Ne...</span></div>
        <div class="ti l1"><svg><use href="#tsys"/></svg><span>System V...</span></div>
        <div class="ti l1 strong"><svg><use href="#tplc"/></svg><span>NewPL...</span></div>
        <div class="ti l2 sel"><svg><use href="#tvar"/></svg><span>Variab...</span></div>
        <div class="ti l2"><svg><use href="#tpar"/></svg><span>Param...</span></div>
        <div class="ti l3"><svg><use href="#tbox"/></svg><span>Ba...</span></div>
        <div class="ti l3"><svg><use href="#tbox2"/></svg><span>I/...</span></div>
        <div class="ti l3"><svg><use href="#tbox3"/></svg><span>Int...</span></div>
        <div class="ti l2"><svg><use href="#tscan"/></svg><span>Scan ...</span></div>
        <div class="ti l3"><svg><use href="#tnew"/></svg><span>Ne...</span></div>
      </div>
      <div class="ptabs"><span class="pt active">Proj...</span><span class="pt">Vie...</span><span class="pt">Vie...</span></div>
    </aside>

    <section class="editor">
      <div class="tabs">
        <div class="tab active"><span class="tl">NewProgram</span><span class="tx">✕</span></div>
        <div class="tab io"><span class="tl">I/O Parameter</span><span class="tx">✕</span></div>
        <div class="tab vc"><span class="tl">Variable/Comment</span><span class="tx">✕</span></div>
        <span class="tabmenu"></span>
      </div>
      <div class="frame">
        <div class="sheet">
          <div class="sheetmain">
            <div class="ladder">

              <div class="row cmtrow">
                <div class="head c">Comment</div>
                <div class="cells"><div class="cell"><span class="cmttext">RESET COUNTER</span></div><div class="cell"></div><div class="cell"></div><div class="cell"></div><div class="cell"></div><div class="cell"></div><div class="cell"></div><div class="cell"></div><div class="cell"></div><div class="cell"></div></div>
                <div class="tail"></div>
              </div>

              <div class="row rung">
                <div class="head n">21</div>
                <div class="cells">
                  <div class="cell"><div class="addr">M00000</div><svg class="sym"><use href="#contact"/></svg><div class="lbl">SYSTEM_O<br>N</div></div>
                  <div class="cell"><div class="addr">P00002</div><svg class="sym"><use href="#contact"/></svg><div class="lbl">RESET_CO<br>UNTER</div></div>
                  <div class="cell wire"></div><div class="cell wire"></div><div class="cell wire"></div><div class="cell wire"></div><div class="cell wire"></div>
                  <div class="cell wire"><div class="fb"><span>MOV</span><span class="mag">0</span><span>D00000</span></div></div>
                  <div class="cell wire"></div>
                  <div class="cell wire"><div class="lbl below">CAR_COU<br>NTER</div></div>
                </div>
                <div class="tail"></div>
              </div>

              <div class="row cmtrow">
                <div class="head c">Comment</div>
                <div class="cells"><div class="cell"><span class="cmttext">GATE IN UP</span></div><div class="cell"></div><div class="cell"></div><div class="cell"></div><div class="cell"></div><div class="cell"></div><div class="cell"></div><div class="cell"></div><div class="cell"></div><div class="cell"></div></div>
                <div class="tail"></div>
              </div>

              <div class="row rung">
                <div class="head n">26</div>
                <div class="cells">
                  <div class="cell"><div class="addr">M00000</div><svg class="sym"><use href="#contact"/></svg><div class="lbl">SYSTEM_O<br>N</div></div>
                  <div class="cell"><div class="addr">P00003</div><svg class="sym"><use href="#contact"/><text x="68" y="18" class="st" text-anchor="middle">P</text></svg><div class="lbl">SENS_CAR<br>_IN1</div></div>
                  <div class="cell wire"></div><div class="cell wire"></div><div class="cell wire"></div><div class="cell wire"></div><div class="cell wire"></div><div class="cell wire"></div><div class="cell wire"></div>
                  <div class="cell"><div class="addr">P00040</div><svg class="sym"><use href="#coil"/><text x="68" y="18" class="st" text-anchor="middle">S</text></svg><div class="lbl">GATE_IN_<br>UP</div></div>
                </div>
                <div class="tail"></div>
              </div>

              <div class="row rung big">
                <div class="head n">30</div>
                <div class="cells">
                  <div class="cell"><div class="addr">M00000</div><svg class="sym"><use href="#contact"/></svg><div class="lbl">SYSTEM_O<br>N</div></div>
                  <div class="cell"><div class="addr">P00007</div><svg class="sym"><use href="#contact"/><text x="68" y="18" class="st" text-anchor="middle">P</text></svg><div class="lbl">LS_GATE_I<br>N_UP</div></div>
                  <div class="cell wire"></div><div class="cell wire"></div><div class="cell wire"></div><div class="cell wire"></div><div class="cell wire"></div><div class="cell wire"></div><div class="cell wire"></div>
                  <div class="cell"><div class="addr">P00040</div><svg class="sym"><use href="#coil"/><text x="68" y="18" class="st" text-anchor="middle">R</text></svg><div class="lbl">GATE_IN_<br>UP</div></div>
                </div>
                <div class="tail"></div>
              </div>

              <div class="row cmtrow small">
                <div class="head c">Comment</div>
                <div class="cells"><div class="cell"><span class="cmttext">GATE IN DOWN</span></div><div class="cell"></div><div class="cell"></div><div class="cell"></div><div class="cell"></div><div class="cell"></div><div class="cell"></div><div class="cell"></div><div class="cell"></div><div class="cell"></div></div>
                <div class="tail"></div>
              </div>

              <div class="row rung big">
                <div class="head n">35</div>
                <div class="cells">
                  <div class="cell"><div class="addr">M00000</div><svg class="sym"><use href="#contact"/></svg><div class="lbl">SYSTEM_O<br>N</div></div>
                  <div class="cell drop"><div class="addr">P00004</div><svg class="sym"><use href="#contact"/></svg><div class="lbl">SENS_CAR<br>_IN2</div></div>
                  <div class="cell wire drop"></div><div class="cell wire"></div><div class="cell wire"></div><div class="cell wire"></div><div class="cell wire"></div><div class="cell wire"></div><div class="cell wire"></div>
                  <div class="cell"><div class="addr">P00041</div><svg class="sym"><use href="#coil"/><text x="68" y="18" class="st" text-anchor="middle">S</text></svg><div class="lbl">GATE_IN_<br>DOWN</div></div>
                </div>
                <div class="tail"></div>
              </div>

              <div class="row stub">
                <div class="head"></div>
                <div class="cells"><div class="cell"></div><div class="cell down"></div><div class="cell down"></div><div class="cell"></div><div class="cell"></div><div class="cell"></div><div class="cell"></div><div class="cell"></div><div class="cell"></div><div class="cell"></div></div>
                <div class="tail"></div>
              </div>

            </div>
            <div class="vscroll"><span class="vbtn"></span><span class="vthumb"></span></div>
          </div>
          <div class="hscroll"><span class="hthumb"></span><svg class="sizegrip" viewBox="0 0 12 12"><path d="M9 1h2v2H9zM9 4h2v2H9zM6 4h2v2H6zM9 7h2v2H9zM6 7h2v2H6zM3 7h2v2H3z" fill="#a8a8a8"/></svg></div>
        </div>
      </div>
    </section>

    <aside class="vtabs">
      <div class="vtab cat"><span>System catalog</span></div>
      <div class="vtab eds"><span>EDS information</span></div>
    </aside>
  </div>

  <footer class="bottomtabs">
    <div class="bt w42"><span>Find 2</span><i></i></div>
    <div class="bt w104"><span>Communication</span><i></i></div>
    <div class="bt w104b"><span>Cross Reference</span><i></i></div>
    <div class="bt w80"><span>Used Device</span><i></i></div>
    <div class="bt w93"><span>Duplicate Coil</span><i></i></div>
  </footer>
</main>

<div class="mark mark-top">InstrumentationTools.com</div>
<div class="mark mark-mid">InstrumentationTools.com</div>
</body>
</html>
```

FILE: styles.css
```css
* { box-sizing: border-box; }
html, body { margin: 0; height: 990px; width: 1920px; overflow: hidden; }
body {
  position: relative;
  display: flex;
  flex-direction: column;
  background: #d4ddf1;
  font-family: "Open Sans", "Noto Sans", sans-serif;
  color: #1f2a55;
}
.defs { position: absolute; width: 0; height: 0; overflow: hidden; }
.gt { font-family: "Liberation Sans", sans-serif; }

/* title bar */
.titlebar {
  flex: 0 0 30px;
  display: flex;
  align-items: center;
  border-bottom: 2px solid #b9c0cf;
  padding-left: 3px;
}
.appicon { width: 20px; height: 20px; margin-right: 8px; margin-top: -2px; }
.apptitle { font-size: 13.3px; color: #3a4468; letter-spacing: .1px; margin-top: -2px; }
.winbtns { margin-left: auto; display: flex; gap: 30px; padding-right: 14px; margin-top: -2px; }
.wb { width: 16px; height: 16px; }

/* menu */
.menubar {
  flex: 0 0 29px;
  display: flex;
  align-items: center;
  font-size: 13.5px;
  gap: 19.9px;
  padding-bottom: 5px;
}
.menubar .grip { margin: 0 -10.9px 0 4px; align-self: stretch; }

.grip {
  flex: 0 0 8px;
  width: 8px;
  margin: 1px 1px 1px 4px;
  background: repeating-conic-gradient(#8f96a6 0 25%, transparent 0 50%) 0 0 / 4px 4px;
}

/* toolbars */
.toolbars { flex: 0 0 92px; display: flex; flex-direction: column; gap: 2px; }
.tbrow { flex: 0 0 28px; display: flex; gap: 2px; }
.tbrow.tall { flex: 0 0 30px; }
.tb { display: flex; align-items: center; background: #ccd6ec; height: 100%; }
.tbrow.tall .tb { height: 29px; }
.tb.w410 { width: 410px; }
.tb.w646 { width: 646px; }
.b {
  flex: 0 0 27.4px;
  width: 27.4px;
  height: 100%;
  display: flex;
  align-items: center;
  justify-content: center;
}
.b svg { width: 24px; height: 24px; display: block; }
.b.on { background: #fdeeb0; box-shadow: inset 0 0 0 2px #f6cc4e; height: 27px; }
.sep { flex: 0 0 10.5px; align-self: stretch; margin: 2px 0; background: linear-gradient(#b9c4da, #b9c4da) center / 1px 100% no-repeat; }
.sep.n { flex-basis: 9px; }
.sep.s { flex-basis: 8px; }
.sep.l { flex-basis: 12.5px; }
.fk {
  flex: 0 0 27.4px;
  width: 27.4px;
  height: 100%;
  display: flex;
  flex-direction: column;
  align-items: center;
  padding-top: 4px;
}
.fk svg { width: 24px; height: 12px; flex: none; display: block; }
.fk b {
  font: 400 15.5px/13px "Liberation Sans", sans-serif;
  color: #2d4a7e;
  transform: scaleX(.84);
  margin-top: 1px;
  white-space: nowrap;
}
.fk.off b { color: #9aa4ba; }
.fk.on { background: #fdeeb0; box-shadow: inset 0 0 0 2px #f6cc4e; height: 27px; padding-top: 3px; }
.fk.on b { color: #2a4a5e; }

/* workspace */
.workspace { flex: 1; display: flex; flex-direction: column; background: #23446f; min-height: 0; border-top: 1px solid #1d3a62; }
.dockrow { flex: 0 0 801px; display: flex; }

/* project panel */
.project { flex: 0 0 145px; min-width: 0; display: flex; flex-direction: column; background: #fff; height: 801px; }
.projhead {
  flex: 0 0 27px;
  background: #446593;
  display: flex;
  align-items: center;
  color: #dfe7f3;
  font-size: 13.5px;
  padding: 0 6px;
  gap: 12px;
}
.projtitle { flex: 0 0 60px; letter-spacing: .2px; }
.phbtn { width: 12px; height: 12px; flex: none; }
.tree { flex: 1; position: relative; overflow: hidden; padding-top: 1px; }
.treelines { position: absolute; left: 0; top: 0; width: 145px; height: 460px; }
.ti {
  position: relative;
  height: 21.3px;
  display: flex;
  align-items: center;
  font-size: 13.6px;
  color: #3a4468;
  white-space: nowrap;
}
.ti svg { width: 18px; height: 18px; flex: none; margin-right: 5px; }
.ti.l0 { padding-left: 26px; }
.ti.l1 { padding-left: 47px; }
.ti.l2 { padding-left: 68px; }
.ti.l3 { padding-left: 89px; }
.ti.strong { font-weight: 700; color: #111; }
.ti.sel { background: #d3dcf0; margin-left: 65px; padding-left: 3px; }
.ptabs { flex: 0 0 27px; display: flex; background: #446593; font-size: 13px; color: #d8e2f0; }
.pt { padding: 3px 0 0 8px; width: 46px; white-space: nowrap; overflow: hidden; }
.pt + .pt { width: 46px; }
.pt.active { background: #fff; color: #0d78c8; }

/* editor */
.editor { flex: 0 0 1728px; margin-left: 8px; display: flex; flex-direction: column; }
.tabs { flex: 0 0 25px; display: flex; align-items: flex-end; font-size: 13px; position: relative; }
.tab { height: 22px; display: flex; align-items: center; color: #26355c; background: #cbd5ec; border: 1px solid #9fb0cf; border-bottom: 0; margin-left: 2px; }
.tab .tl { flex: 1; text-align: center; white-space: nowrap; padding-bottom: 1px; }
.tab .tx { font-size: 13px; color: #6a6f7c; margin-right: 6px; width: 12px; text-align: center; }
.tab.active {
  width: 158px;
  height: 25px;
  margin-left: 0;
  background: #fff;
  border: 0;
  clip-path: polygon(0 100%, 22px 0, 100% 0, 100% 100%);
  font-weight: 700;
  color: #0d1424;
  padding-left: 28px;
}
.tab.active .tx { font-weight: 400; }
.tab.io { width: 144px; padding-left: 10px; }
.tab.vc { width: 174px; padding-left: 9px; font-size: 13.5px; }
.tabmenu { margin-left: auto; margin-right: 7px; margin-bottom: 8px; border: 5px solid transparent; border-top: 6px solid #fff; border-bottom: 0; }

.frame { flex: 1; background: #fff; padding: 5px 7px 7px 7px; min-height: 0; }
.sheet { height: 100%; display: flex; flex-direction: column; border-left: 2px solid #8f8f8f; border-top: 2px solid #8f8f8f; }
.sheetmain { flex: 1; display: flex; min-height: 0; }
.ladder { flex: 1; overflow: hidden; background: #fff; min-width: 0; }

.row { display: flex; }
.row.cmtrow { height: 74px; }
.row.cmtrow.small { height: 73px; }
.row.rung { height: 125px; }
.row.rung.big { height: 126px; }
.row.stub { height: 17px; }
.head {
  flex: 0 0 112px;
  background: #efefef;
  border-right: 2px solid #111;
  border-bottom: 2px solid #9a9a9a;
  font: 17px/18px "Liberation Sans", sans-serif;
  display: flex;
}
.head.c { align-items: center; justify-content: center; color: #00aa00; padding: 4px 0 0 0; }
.head.n { align-items: flex-end; justify-content: flex-end; color: #2a2aff; padding: 0 11px 0 0; }
.row.stub .head { border-bottom: 0; }
.cells { flex: 0 0 1350px; display: grid; grid-template-columns: repeat(10, 135px); }
.cell {
  position: relative;
  border-bottom: 1px dashed #ebebfa;
  border-left: 1px dashed #ebebfa;
  font: 17px/21px "Liberation Sans", sans-serif;
  text-align: center;
  min-width: 0;
}
.row.stub .cell { border-bottom: 0; }
.cmtrow .cell { display: flex; align-items: center; padding-top: 4px; }
.cell:first-child { border-left: 0; }
.cmttext { color: #00aa00; white-space: nowrap; position: relative; z-index: 1; }
.tail { flex: 1; border-left: 3px solid #000; }

.addr { color: #111; height: 21px; margin-top: 15px; }
.sym { display: block; width: 135px; height: 24px; margin: 2px 0 0 -1px; }
.cell:first-child .sym { margin-left: 0; }
.st { font: 17px "Liberation Sans", sans-serif; fill: #222; }
.lbl { color: #2a2aff; margin-top: 3px; white-space: nowrap; }
.lbl.below { position: absolute; left: 0; right: 0; top: 65px; margin: 0; }
.wire::before {
  content: "";
  position: absolute;
  left: -1px;
  right: 0;
  top: 49px;
  height: 2px;
  background: #555;
}
.fb {
  position: absolute;
  z-index: 2;
  left: 13px;
  top: 16px;
  width: 379px;
  height: 42px;
  background: #fff;
  border: 2px solid #222;
  box-shadow: 5px 5px 0 #c6c6c6;
  display: grid;
  grid-template-columns: 104px 164px 105px;
  align-items: center;
  justify-items: center;
  color: #111;
}
.mag { color: #ff00ff; }
.drop::after {
  content: "";
  position: absolute;
  left: -1px;
  top: 50px;
  bottom: -1px;
  width: 2px;
  background: #333;
}
.down::after {
  content: "";
  position: absolute;
  left: -1px;
  top: 0;
  bottom: 0;
  width: 2px;
  background: #333;
}

.vscroll { flex: 0 0 22px; background: #efefef; position: relative; display: flex; flex-direction: column; align-items: center; }
.vbtn { width: 21px; height: 9px; border-right: 2px solid #999; border-bottom: 2px solid #999; background: #f4f4f4; }
.vthumb { width: 2px; height: 92px; background: #8f8f8f; margin-top: 101px; }
.hscroll { flex: 0 0 22px; background: #efefef; display: flex; align-items: center; padding-left: 20px; position: relative; }
.hthumb { width: 1588px; height: 3px; background: #8c8c8c; }
.sizegrip { width: 12px; height: 12px; margin-left: auto; margin-right: 4px; margin-top: 8px; }

/* right docked tabs */
.vtabs { flex: 0 0 39px; min-width: 0; padding-top: 7px; display: flex; flex-direction: column; gap: 3px; }
.vtab {
  border-right: 8px solid #446593;
  writing-mode: vertical-rl;
  color: #dbe4f1;
  font-size: 13.5px;
  line-height: 16px;
  padding-left: 3px;
  display: flex;
  align-items: center;
  white-space: nowrap;
  letter-spacing: .6px;
}
.vtab.cat { height: 108px; padding-top: 4px; }
.vtab.eds { height: 116px; padding-top: 5px; letter-spacing: .6px; }

/* bottom tabs */
.bottomtabs { flex: 1; display: flex; gap: 6px; padding-left: 9px; font-size: 13.5px; color: #dbe4f1; }
.bt { display: flex; flex-direction: column; justify-content: flex-end; white-space: nowrap; }
.bt span { padding: 0 0 5px 2px; line-height: 18px; }
.bt i { display: block; height: 8px; background: #446593; }
.bt.w42 { width: 42px; }
.bt.w104 { width: 104px; }
.bt.w104b { width: 105px; margin-left: 1px; }
.bt.w80 { width: 80px; }
.bt.w93 { width: 93px; }

/* watermarks over the whole window */
.mark { position: absolute; font-family: "Liberation Sans", sans-serif; white-space: nowrap; }
.mark-top { left: 943px; top: 146px; font-size: 24px; line-height: 28px; color: #1e2a3e; }
.mark-mid { left: 698px; top: 624px; font-size: 45.7px; line-height: 54px; color: #808080; opacity: .9; }
```
